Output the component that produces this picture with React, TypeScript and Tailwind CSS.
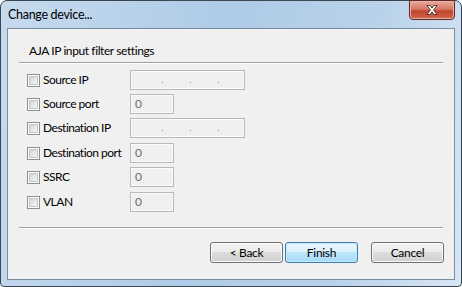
import React from "react";

const font = { fontFamily: 'Lato, "Noto Sans", sans-serif' };

type Row = { label: string; kind: "ip" | "num"; mt: string };

const rows: Row[] = [
  { label: "Source IP", kind: "ip", mt: "mt-0" },
  { label: "Source port", kind: "num", mt: "mt-[4px]" },
  { label: "Destination IP", kind: "ip", mt: "mt-[4px]" },
  { label: "Destination port", kind: "num", mt: "mt-[5px]" },
  { label: "SSRC", kind: "num", mt: "mt-[4px]" },
  { label: "VLAN", kind: "num", mt: "mt-[5px]" },
];

const CheckBox = () => (
  <span className="w-[13px] h-[13px] border border-[#8e8f8f] bg-white p-px shrink-0">
    <span className="block w-full h-full border border-[#c6c6c6] bg-gradient-to-br from-[#d4d4d4] to-[#f6f6f6]" />
  </span>
);

const Field = ({ kind }: { kind: "ip" | "num" }) => (
  <div
    className={`h-[20px] border border-[#b9b9b9] bg-[#f0f0f0] shadow-[inset_0_0_0_1px_#fafafa] flex items-center ${
      kind === "ip" ? "w-[115px]" : "w-[44px]"
    }`}
  >
    {kind === "ip" ? (
      <div className="flex pl-[31px] gap-[27px] pt-[4px]">
        <span className="w-px h-px bg-[#7d8b9a]" />
        <span className="w-px h-px bg-[#7d8b9a]" />
        <span className="w-px h-px bg-[#7d8b9a]" />
      </div>
    ) : (
      <span className="pl-[4px] text-[12px] leading-none text-[#6d6d6d]">0</span>
    )}
  </div>
);

const Button = ({ label, primary }: { label: string; primary?: boolean }) => (
  <button
    className={`w-[73px] h-[21px] rounded-[3px] border text-[12px] leading-none tracking-[-0.3px] text-black ${
      primary
        ? "border-[#3c7fb1] bg-[linear-gradient(#eaf6fd_0%,#d9f0fc_50%,#bee6fd_50%,#a7d9f5_100%)] shadow-[inset_0_0_0_1px_#c4eafd]"
        : "border-[#707070] bg-[linear-gradient(#f2f2f2_0%,#ebebeb_50%,#dddddd_50%,#cfcfcf_100%)] shadow-[inset_0_0_0_1px_#fbfbfb]"
    }`}
    style={font}
  >
    {label}
  </button>
);

export default function App() {
  return (
    <div className="w-[462px] h-[287px] bg-white" style={font}>
      <div className="w-full h-full border border-[#3b4653] rounded-t-[7px] rounded-b-[4px] bg-[linear-gradient(100deg,#c6daee_0%,#aecbe7_45%,#b9d2ea_75%,#d8e6f4_100%)] flex flex-col px-[6px] pb-[6px]">
        <div className="h-[27px] flex items-start justify-between">
          <span className="pl-px pt-[5px] text-[12.5px] tracking-[-0.3px] text-black">Change device...</span>
          <div className="-mt-px w-[46px] h-[20px] rounded-b-[4px] border border-[#5e2b24] bg-[linear-gradient(#e9a99b_0%,#d67a66_45%,#c2432b_55%,#d0674e_100%)] flex items-center justify-center shadow-[inset_0_0_0_1px_#e9b1a4]">
            <svg width="14" height="12" viewBox="0 0 14 12">
              <path
                d="M2 1.5h3l2 2.6 2-2.6h3l-3.4 4.5 3.4 4.5h-3l-2-2.6-2 2.6h-3l3.4-4.5z"
                fill="#fff"
                stroke="#4a3a38"
                strokeWidth="1"
                strokeLinejoin="round"
              />
            </svg>
          </div>
        </div>
        <div className="flex-1 border border-[#7d8da0] bg-[#f0f0f0] flex flex-col">
          <div className="pl-[21px] pt-[13px] h-[33px] text-[12px] tracking-[-0.4px] text-black">
            AJA IP input filter settings
          </div>
          <div className="mx-[11px] border-t border-[#a0a0a0] border-b border-b-white" />
          <div className="pl-[19px] pt-[6px] flex flex-col">
            {rows.map((r) => (
              <div key={r.label} className={`h-[20px] flex items-center ${r.mt}`}>
                <div className="w-[103px] flex items-center gap-[3px]">
                  <CheckBox />
                  <span className="text-[12px] tracking-[-0.5px] text-black whitespace-nowrap">{r.label}</span>
                </div>
                <Field kind={r.kind} />
              </div>
            ))}
          </div>
          <div className="mx-[11px] mt-[15px] border-t border-[#a0a0a0] border-b border-b-white" />
          <div className="flex justify-end pr-[10px] pt-[13px]">
            <Button label="< Back" />
            <div className="w-[2px]" />
            <Button label="Finish" primary />
            <div className="w-[13px]" />
            <Button label="Cancel" />
          </div>
        </div>
      </div>
    </div>
  );
}
